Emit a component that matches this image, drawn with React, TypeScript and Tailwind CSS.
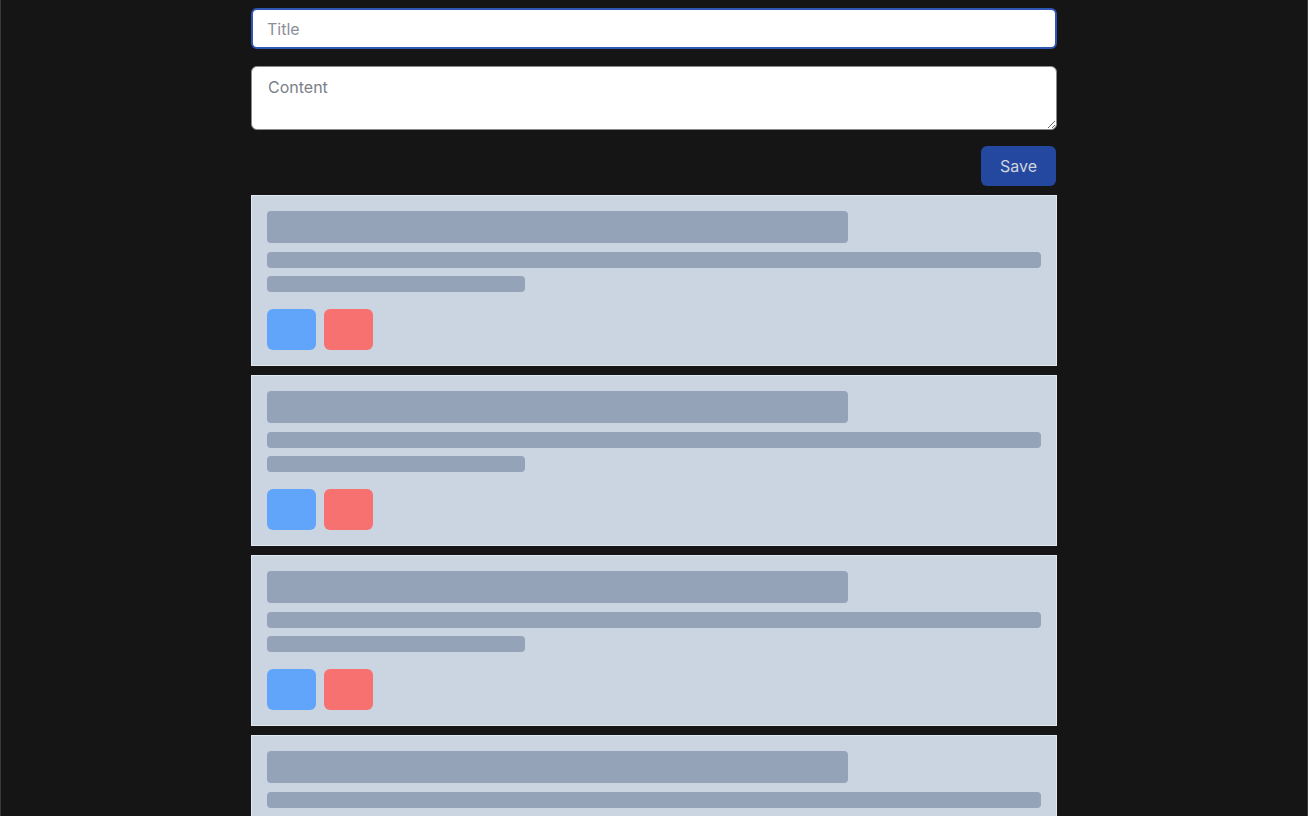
import React from "react";

function SkeletonCard() {
  return (
    <div className="bg-[#cbd5e1] border border-[#e2e8f0] px-[15px] pt-[15px] pb-[15px]">
      <div className="h-8 w-[581px] rounded bg-[#94a3b8]" />
      <div className="mt-[9px] h-4 w-full rounded bg-[#94a3b8]" />
      <div className="mt-2 h-4 w-[258px] rounded bg-[#94a3b8]" />
      <div className="mt-[17px] flex gap-2">
        <div className="h-[41px] w-[49px] rounded-md bg-[#60a5fa]" />
        <div className="h-[41px] w-[49px] rounded-md bg-[#f87171]" />
      </div>
    </div>
  );
}

export default function App() {
  return (
    <div
      className="min-h-screen h-[816px] overflow-hidden bg-[#151515] border-x border-[#3a3a3a]"
      style={{ fontFamily: "Inter, 'Noto Sans', sans-serif" }}
    >
      <div className="mx-auto w-[806px] pt-2">
        {/* Form */}
        <input
          autoFocus
          placeholder="Title"
          className="block h-[41px] w-full rounded-md border-2 border-[#2f56b5] bg-white px-[14px] text-base text-gray-800 placeholder:text-[#8a8f98] outline-none"
        />
        <textarea
          placeholder="Content"
          className="mt-[17px] block h-16 w-full rounded-md border border-[#8a8a8a] bg-white px-4 py-2 text-base text-gray-800 placeholder:text-[#7a7f88] outline-none"
        />
        <div className="mt-4 flex justify-end">
          <button className="mr-px h-10 w-[75px] rounded-md bg-[#2448a0] text-base text-gray-300">
            Save
          </button>
        </div>

        {/* Notes list (loading) */}
        <div className="mt-[9px] flex flex-col gap-[9px]">
          <SkeletonCard />
          <SkeletonCard />
          <SkeletonCard />
          <SkeletonCard />
        </div>
      </div>
    </div>
  );
}
